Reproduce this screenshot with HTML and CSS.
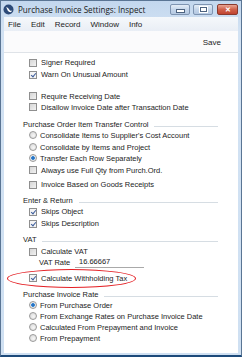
FILE: index.html
```html
<!DOCTYPE html>
<html lang="en">
<head>
  <meta charset="UTF-8">
  <meta name="viewport" content="width=device-width, initial-scale=1.0">
  <title>Purchase Invoice Settings: Inspect</title>
  <link rel="stylesheet" href="styles.css">
</head>
<body>
  <div class="window">
    <div class="titlebar">
      <svg class="app-icon" width="11" height="11" viewBox="0 0 11 11">
        <circle cx="5.5" cy="5.5" r="5" fill="#2c4a78"/>
        <path d="M3 3.2 C4.5 4.5 4 7 6.5 8 C8 8.5 9 7.5 9.2 6.5 C8 7.2 6.8 6.8 6.2 5.6 C5.5 4.2 4.5 3 3 3.2 Z" fill="#fff"/>
      </svg>
      <div class="title">Purchase Invoice Settings: Inspect</div>
      <div class="winbtn min"><span></span></div>
      <div class="winbtn max"><span></span></div>
      <div class="winbtn close">&#x2715;</div>
    </div>

    <div class="menubar">
      <span>File</span>
      <span>Edit</span>
      <span>Record</span>
      <span>Window</span>
      <span>Info</span>
    </div>

    <div class="toolbar">
      <span class="save">Save</span>
    </div>

    <div class="content">
      <div class="row first"><i class="cb"></i>Signer Required</div>
      <div class="row m1"><i class="cb on"></i>Warn On Unusual Amount</div>

      <div class="row m10"><i class="cb"></i>Require Receiving Date</div>
      <div class="row"><i class="cb"></i>Disallow Invoice Date after Transaction Date</div>

      <div class="head m6"><span>Purchase Order Item Transfer Control</span><b></b></div>
      <div class="row"><i class="rb"></i>Consolidate Items to Supplier's Cost Account</div>
      <div class="row m1"><i class="rb"></i>Consolidate by Items and Project</div>
      <div class="row"><i class="rb on"></i>Transfer Each Row Separately</div>
      <div class="row m1"><i class="cb"></i>Always use Full Qty from Purch.Ord.</div>
      <div class="row m3"><i class="cb"></i>Invoice Based on Goods Receipts</div>

      <div class="head m5"><span>Enter &amp; Return</span><b></b></div>
      <div class="row"><i class="cb on"></i>Skips Object</div>
      <div class="row m1"><i class="cb on"></i>Skips Description</div>

      <div class="head m5"><span>VAT</span><b></b></div>
      <div class="row m1"><i class="cb"></i>Calculate VAT</div>
      <div class="row field"><span class="label">VAT Rate</span><span class="value">16.66667</span></div>
      <div class="row m4 marked"><i class="cb on"></i>Calculate Withholding Tax</div>

      <div class="head m5"><span>Purchase Invoice Rate</span><b></b></div>
      <div class="row"><i class="rb on"></i>From Purchase Order</div>
      <div class="row"><i class="rb"></i>From Exchange Rates on Purchase Invoice Date</div>
      <div class="row"><i class="rb"></i>Calculated From Prepayment and Invoice</div>
      <div class="row"><i class="rb"></i>From Prepayment</div>
    </div>
  </div>
</body>
</html>
```

FILE: styles.css
```css
body {
  margin: 0;
  font-family: 'Liberation Sans', Arial, sans-serif;
  color: #1c1c1c;
  background: #fff;
}
.window {
  width: 242px;
  height: 357px;
  box-sizing: border-box;
  border: 1px solid #5a7594;
  border-bottom: 2px solid #1d4a7a;
  background: linear-gradient(#c3d7ee, #d2e2f3 30px, #cfe0f2);
  padding: 0 3px 2px 3px;
  display: flex;
  flex-direction: column;
}
.titlebar {
  height: 16px;
  display: flex;
  align-items: center;
  margin: 0 -3px;
  padding: 0 3px 0 2px;
}
.app-icon {
  margin-right: 4px;
}
.title {
  font-family: 'Open Sans', 'Liberation Sans', sans-serif;
  font-size: 8.1px;
  color: #1a1a1a;
  flex-grow: 1;
}
.winbtn {
  height: 11px;
  box-sizing: border-box;
  border: 1px solid #7e94b1;
  border-radius: 2px;
  background: linear-gradient(#e4edf7, #c4d5ea 50%, #b5c9e2);
  display: flex;
  align-items: center;
  justify-content: center;
  margin-top: 1px;
}
.winbtn.min {
  width: 20px;
  margin-right: 3px;
}
.winbtn.min span {
  width: 7px;
  height: 2px;
  margin-top: 3px;
  background: #fff;
  border: 1px solid #4d6380;
}
.winbtn.max {
  width: 20px;
  margin-right: 4px;
}
.winbtn.max span {
  width: 5px;
  height: 3px;
  border: 1px solid #4d6380;
  background: #fff;
  outline: 1px solid #fff;
}
.winbtn.close {
  width: 21px;
  border-color: #8a3a2e;
  background: linear-gradient(#e8a594, #d0614b 50%, #c04430);
  color: #fff;
  font-size: 7px;
  font-weight: bold;
}
.menubar {
  height: 14px;
  display: flex;
  align-items: center;
  background: linear-gradient(#f5f8fb, #e9eef5);
  font-size: 8px;
  padding-left: 4px;
}
.menubar span {
  margin-right: 10px;
}
.toolbar {
  height: 21px;
  background: #fbfbfc;
  border-bottom: 1px solid #dfe3e8;
  display: flex;
  align-items: center;
  justify-content: flex-end;
  font-size: 8px;
}
.save {
  margin-right: 17px;
  margin-top: 1px;
}
.content {
  flex-grow: 1;
  background: #fff;
  font-size: 7.5px;
  padding: 0 0 0 19px;
}
.row {
  height: 11px;
  display: flex;
  align-items: center;
  white-space: nowrap;
  padding-left: 6px;
}
.row.first { margin-top: 4px; }
.m1 { margin-top: 1px; }
.m3 { margin-top: 3.5px; }
.m4 { margin-top: 4.5px; }
.m5 { margin-top: 5px; }
.m6 { margin-top: 6px; }
.m10 { margin-top: 10.5px; }
.cb {
  width: 8px;
  height: 8px;
  box-sizing: border-box;
  border: 1px solid #8f8f8f;
  background: linear-gradient(135deg, #d6d6d6, #f2f2f2);
  margin-right: 4px;
  position: relative;
  flex-shrink: 0;
}
.cb.on {
  background: #f4f4f4;
}
.cb.on::after {
  content: '';
  position: absolute;
  left: 2px;
  top: 0;
  width: 2px;
  height: 4px;
  border: solid #3d5d9c;
  border-width: 0 1.2px 1.2px 0;
  transform: rotate(40deg);
}
.rb {
  width: 8px;
  height: 8px;
  box-sizing: border-box;
  border-radius: 50%;
  border: 1px solid #9a9a9a;
  background: radial-gradient(circle at 60% 60%, #f6f6f6, #d4d4d4);
  margin-right: 3px;
  flex-shrink: 0;
}
.rb.on {
  background: radial-gradient(circle, #1d5fb0 0, #3b8ad6 1.6px, #eaeaea 2.2px);
}
.head {
  height: 11px;
  display: flex;
  align-items: center;
  width: 195px;
  white-space: nowrap;
}
.head b {
  flex-grow: 1;
  height: 1px;
  background: #d6dde3;
  margin: 4px 0 0 6px;
}
.field .label {
  margin-left: 10px;
  width: 36px;
}
.field .value {
  width: 65px;
  padding-left: 4px;
  border-bottom: 1px solid #a9a9a9;
  line-height: 10px;
}
.marked {
  position: relative;
}
.marked::before {
  content: '';
  position: absolute;
  left: -16px;
  top: -4px;
  width: 129px;
  height: 19px;
  box-sizing: border-box;
  border: 1.5px solid #e41f24;
  border-radius: 50%;
}
```
